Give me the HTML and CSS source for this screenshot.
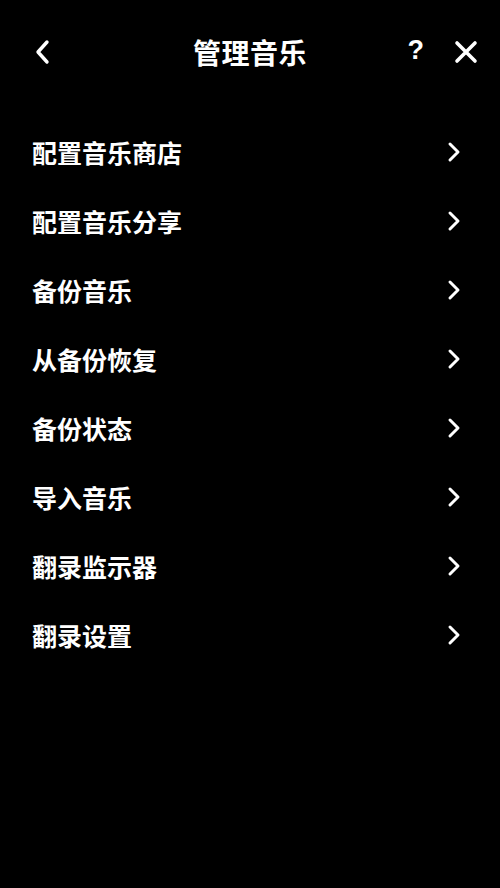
FILE: index.html
```html
<!DOCTYPE html>
<html lang="zh">
<head>
<meta charset="utf-8">
<link rel="stylesheet" href="styles.css">
</head>
<body>
<div class="screen">
  <header class="bar">
    <div class="back">
      <svg width="16" height="26" viewBox="0 0 16 26"><path d="M13 3 L4 13 L13 23" fill="none" stroke="#fff" stroke-width="3.4" stroke-linecap="round" stroke-linejoin="round"/></svg>
    </div>
    <div class="title">管理音乐</div>
    <div class="actions">
      <span class="help">?</span>
      <svg class="close" width="24" height="24" viewBox="0 0 24 24"><path d="M3 3 L21 21 M21 3 L3 21" fill="none" stroke="#fff" stroke-width="3.6" stroke-linecap="round"/></svg>
    </div>
  </header>
  <ul class="list">
    <li class="row"><span>配置音乐商店</span><svg class="chev" width="14" height="22" viewBox="0 0 14 22"><path d="M3 3 L11 11 L3 19" fill="none" stroke="#fff" stroke-width="3" stroke-linecap="round" stroke-linejoin="round"/></svg></li>
    <li class="row"><span>配置音乐分享</span><svg class="chev" width="14" height="22" viewBox="0 0 14 22"><path d="M3 3 L11 11 L3 19" fill="none" stroke="#fff" stroke-width="3" stroke-linecap="round" stroke-linejoin="round"/></svg></li>
    <li class="row"><span>备份音乐</span><svg class="chev" width="14" height="22" viewBox="0 0 14 22"><path d="M3 3 L11 11 L3 19" fill="none" stroke="#fff" stroke-width="3" stroke-linecap="round" stroke-linejoin="round"/></svg></li>
    <li class="row"><span>从备份恢复</span><svg class="chev" width="14" height="22" viewBox="0 0 14 22"><path d="M3 3 L11 11 L3 19" fill="none" stroke="#fff" stroke-width="3" stroke-linecap="round" stroke-linejoin="round"/></svg></li>
    <li class="row"><span>备份状态</span><svg class="chev" width="14" height="22" viewBox="0 0 14 22"><path d="M3 3 L11 11 L3 19" fill="none" stroke="#fff" stroke-width="3" stroke-linecap="round" stroke-linejoin="round"/></svg></li>
    <li class="row"><span>导入音乐</span><svg class="chev" width="14" height="22" viewBox="0 0 14 22"><path d="M3 3 L11 11 L3 19" fill="none" stroke="#fff" stroke-width="3" stroke-linecap="round" stroke-linejoin="round"/></svg></li>
    <li class="row"><span>翻录监示器</span><svg class="chev" width="14" height="22" viewBox="0 0 14 22"><path d="M3 3 L11 11 L3 19" fill="none" stroke="#fff" stroke-width="3" stroke-linecap="round" stroke-linejoin="round"/></svg></li>
    <li class="row"><span>翻录设置</span><svg class="chev" width="14" height="22" viewBox="0 0 14 22"><path d="M3 3 L11 11 L3 19" fill="none" stroke="#fff" stroke-width="3" stroke-linecap="round" stroke-linejoin="round"/></svg></li>
  </ul>
</div>
</body>
</html>
```
FILE: styles.css
```css
html, body {
  margin: 0;
  padding: 0;
  background: #000;
}
.screen {
  width: 500px;
  height: 888px;
  background: #000;
  color: #fff;
  font-family: "Noto Sans CJK SC", "Noto Sans", sans-serif;
  font-weight: 700;
}
.bar {
  height: 103px;
  display: grid;
  grid-template-columns: 1fr auto 1fr;
  align-items: center;
  padding: 0 22px;
}
.back {
  display: flex;
  align-items: center;
  padding-left: 12px;
}
.title {
  font-size: 28px;
  line-height: 1;
  letter-spacing: 0.5px;
}
.actions {
  display: flex;
  justify-content: flex-end;
  align-items: center;
  gap: 30px;
}
.help {
  font-family: "Liberation Sans", sans-serif;
  font-weight: 700;
  font-size: 27px;
  line-height: 1;
  padding-bottom: 2px;
}
.list {
  list-style: none;
  margin: 0;
  padding: 14px 0 0 0;
}
.row {
  height: 69px;
  display: flex;
  align-items: center;
  justify-content: space-between;
  padding: 0 39px 0 32px;
  font-size: 25px;
}
.chev {
  display: block;
}
```
